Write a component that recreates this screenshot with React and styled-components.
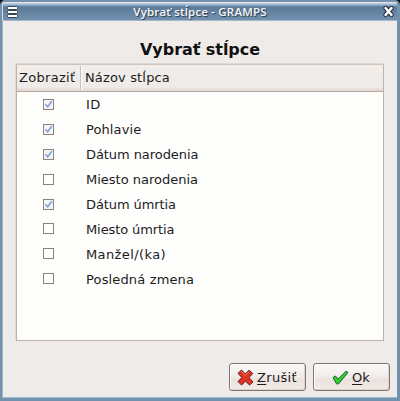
import React from "react";
import styled, { createGlobalStyle } from "styled-components";

const GlobalStyle = createGlobalStyle`
  * { box-sizing: border-box; }
  body { margin: 0; background: #05080b; overflow: hidden; }
`;

const Window = styled.main`
  width: 400px;
  height: 401px;
  display: flex;
  flex-direction: column;
  border: solid #7191ad;
  border-width: 2px 3px 3px 2px;
  border-radius: 5px 5px 0 0;
  background: #efebe8;
  font-family: "DejaVu Sans", sans-serif;
  font-size: 13px;
  color: #1c1c1c;
  overflow: hidden;
  box-shadow: inset 1px -1px #9eb7cb;
`;

const TitleBar = styled.header`
  height: 19px;
  flex: none;
  display: grid;
  grid-template-columns: 20px 1fr 20px;
  align-items: center;
  background: linear-gradient(#e5e5e5 0 1px, #b9cbe0 1px 2px, #8ca9c7 3px, #5b7a99 5px, #6685a3 11px, #7392b1 18px, #a6b8c8 18px);
  border-left: 1px solid #d2d9df;
`;

const WindowTitle = styled.h1`
  margin: 0;
  text-align: center;
  font: 600 11.5px/17px "Open Sans", sans-serif;
  letter-spacing: ${({ $spacing }) => $spacing};
  color: #f5f7fa;
  text-shadow: 1px 1px 1px #29394a;
  white-space: nowrap;
`;

const TitleIcon = styled.svg`
  display: block;
  width: 16px;
  height: 16px;
  justify-self: ${({ $side }) => $side};
`;

const Content = styled.section`
  flex: 1;
  display: flex;
  flex-direction: column;
  padding: 18px 13px 7px 14px;
`;

const Heading = styled.h2`
  margin: 0 0 3px;
  height: 22px;
  text-align: center;
  font-size: 16px;
  line-height: 22px;
  font-weight: bold;
  letter-spacing: ${({ $spacing }) => $spacing};
  color: #111;
`;

const ListFrame = styled.div`
  height: 277px;
  flex: none;
  border: 1px solid #c3b2a3;
  border-top-color: #d1c4b9;
  box-shadow: -1px -1px #e0d8d1;
  background: #fefefd;
`;

const ListHeader = styled.div`
  height: 27px;
  display: grid;
  grid-template-columns: 63px 1fr;
  align-items: center;
  background: linear-gradient(#f1edeb, #efebe8 85%, #e0d8d4);
  border-bottom: 1px solid #b7a596;
`;

const HeaderCell = styled.span`
  padding: 1px 0 1px ${({ $pad }) => $pad};
  letter-spacing: ${({ $spacing }) => $spacing};
  border-left: ${({ $divided }) => ($divided ? "1px solid #c8bfba" : "0")};
  box-shadow: ${({ $divided }) => ($divided ? "inset 1px 0 #fff" : "none")};
  line-height: 22px;
  white-space: nowrap;
`;

const Row = styled.label`
  height: 24.9px;
  display: grid;
  grid-template-columns: 64px 1fr;
  align-items: center;
`;

const Box = styled.svg`
  display: block;
  width: 11px;
  height: 11px;
  margin-left: 26px;
`;

const RowText = styled.span`
  padding-left: 5px;
  line-height: 22px;
  letter-spacing: ${({ $spacing }) => $spacing};
  padding-top: 2px;
`;

const Actions = styled.footer`
  display: flex;
  justify-content: flex-end;
  gap: 7px;
  margin-top: auto;
  margin-right: -6px;
`;

const Button = styled.button`
  width: 77px;
  height: 28px;
  display: flex;
  align-items: center;
  justify-content: center;
  gap: 3px;
  padding: 1px 1px 0 0;
  border: 1px solid #81766f;
  border-radius: 3px;
  background: linear-gradient(#faf9f8, #f1ecea 48%, #ece2de 58%, #f1eae7);
  box-shadow: inset 1px 1px #fff, inset -1px -1px #ddd3ce;
  font: inherit;
  letter-spacing: ${({ $spacing }) => $spacing};
  color: inherit;
`;

const ButtonIcon = styled.svg`
  width: 17px;
  height: 17px;
  flex: none;
`;

const Mnemonic = styled.span`
  text-decoration: underline;
  text-underline-offset: 2px;
  text-decoration-thickness: 1px;
  text-decoration-skip-ink: none;
`;

const columns = [
  { name: "ID", shown: true, spacing: "0.3px" },
  { name: "Pohlavie", shown: true, spacing: "0.1px" },
  { name: "Dátum narodenia", shown: true, spacing: "-0.07px" },
  { name: "Miesto narodenia", shown: false, spacing: "0px" },
  { name: "Dátum úmrtia", shown: true, spacing: "-0.1px" },
  { name: "Miesto úmrtia", shown: false, spacing: "-0.1px" },
  { name: "Manžel/(ka)", shown: false, spacing: "0.4px" },
  { name: "Posledná zmena", shown: false, spacing: "0.15px" },
];

function CheckBox({ checked }) {
  return (
    <Box viewBox="0 0 11 11">
      <rect x="0.5" y="0.5" width="10" height="10" fill={checked ? "#f3f4f8" : "#fff"} stroke="#8c827c" />
      {checked && <path d="M2.4 5.3 4.7 7.8 8.8 2.2" fill="none" stroke="#7f9fcf" strokeWidth="1.5" />}
    </Box>
  );
}

export default function App() {
  return (
    <>
      <GlobalStyle />
      <Window>
        <TitleBar>
          <TitleIcon $side="start" viewBox="0 0 16 16">
            <g fill="#fff" stroke="#35434f">
              <rect x="4.5" y="2.5" width="10" height="3" rx="1" />
              <rect x="4.5" y="6.5" width="10" height="3" rx="1" />
              <rect x="4.5" y="10.5" width="10" height="3" rx="1" />
            </g>
          </TitleIcon>
          <WindowTitle $spacing="0.18px">Vybrať stĺpce - GRAMPS</WindowTitle>
          <TitleIcon $side="end" viewBox="0 0 16 16">
            <path d="M4.7 4.2 10.3 10.8M10.3 4.2 4.7 10.8" stroke="#263442" strokeWidth="4.8" strokeLinecap="round" />
            <path d="M4.7 4.2 10.3 10.8M10.3 4.2 4.7 10.8" stroke="#fff" strokeWidth="2.4" strokeLinecap="square" />
          </TitleIcon>
        </TitleBar>
        <Content>
          <Heading $spacing="-0.05px">Vybrať stĺpce</Heading>
          <ListFrame>
            <ListHeader>
              <HeaderCell $pad="2px" $spacing="0.3px">Zobraziť</HeaderCell>
              <HeaderCell $pad="4px" $spacing="0.15px" $divided>Názov stĺpca</HeaderCell>
            </ListHeader>
            {columns.map(({ name, shown, spacing }) => (
              <Row key={name}>
                <CheckBox checked={shown} />
                <RowText $spacing={spacing}>{name}</RowText>
              </Row>
            ))}
          </ListFrame>
          <Actions>
            <Button $spacing="0.3px">
              <ButtonIcon viewBox="0 0 17 17">
                <path d="M4.5 1 8.3 5 12 1.2 15.8 4.5 12 8.5 16 13 12.5 16 8.5 12.2 4.5 16 1 12.5 4.8 8.5 1 4.3Z" fill="#df3425" stroke="#642019" strokeLinejoin="round" />
                <path d="M4.5 2.5 8.3 6.5 12 2.8" fill="none" stroke="#f17968" />
              </ButtonIcon>
              <span><Mnemonic>Z</Mnemonic>rušiť</span>
            </Button>
            <Button $spacing="0px">
              <ButtonIcon viewBox="0 0 17 17">
                <path d="M1 8.5 3.5 7 6 10.2 14 2.3 16 3.4 6.5 15 4.5 14.8Z" fill="#2bd031" stroke="#285e29" strokeLinejoin="round" />
              </ButtonIcon>
              <span><Mnemonic>O</Mnemonic>k</span>
            </Button>
          </Actions>
        </Content>
      </Window>
    </>
  );
}
